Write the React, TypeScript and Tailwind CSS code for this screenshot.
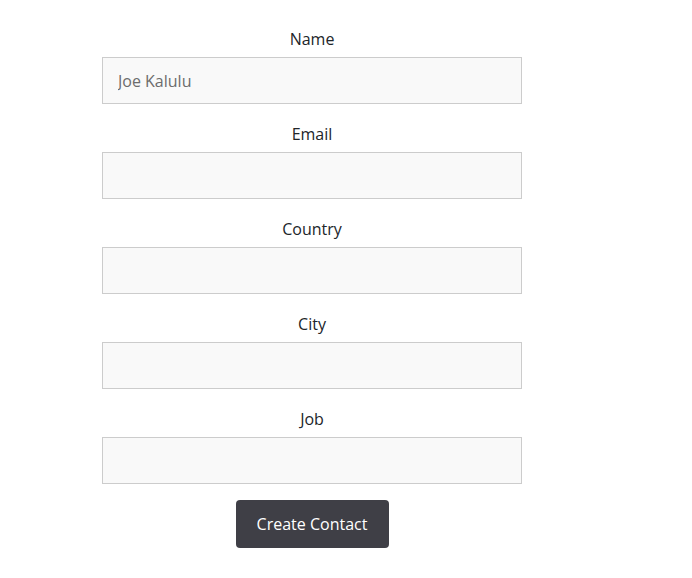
import React from "react";

const fields = [
  { label: "Name", placeholder: "Joe Kalulu" },
  { label: "Email", placeholder: "" },
  { label: "Country", placeholder: "" },
  { label: "City", placeholder: "" },
  { label: "Job", placeholder: "" },
];

export default function App() {
  return (
    <div
      className="min-h-[578px] w-full bg-white text-[#212529]"
      style={{ fontFamily: '"Segoe UI", "Open Sans", "Noto Sans", sans-serif' }}
    >
      <form className="ml-[102px] flex w-[420px] flex-col items-center pt-[27px]">
        <div className="flex w-full flex-col gap-[18px]">
          {fields.map((f) => (
            <div key={f.label} className="flex w-full flex-col items-center">
              <label className="text-[16px] leading-6">{f.label}</label>
              <input
                className="mt-[6px] h-[47px] w-full border border-[#cccccc] bg-[#f9f9f9] px-[15px] text-[16px] text-[#212529] outline-none placeholder:text-[#6c6c6c]"
                placeholder={f.placeholder}
              />
            </div>
          ))}
        </div>
        <button
          type="button"
          className="mt-4 h-12 w-[153px] rounded-[4px] bg-[#3f3f46] text-[16px] text-white"
        >
          Create Contact
        </button>
      </form>
    </div>
  );
}
